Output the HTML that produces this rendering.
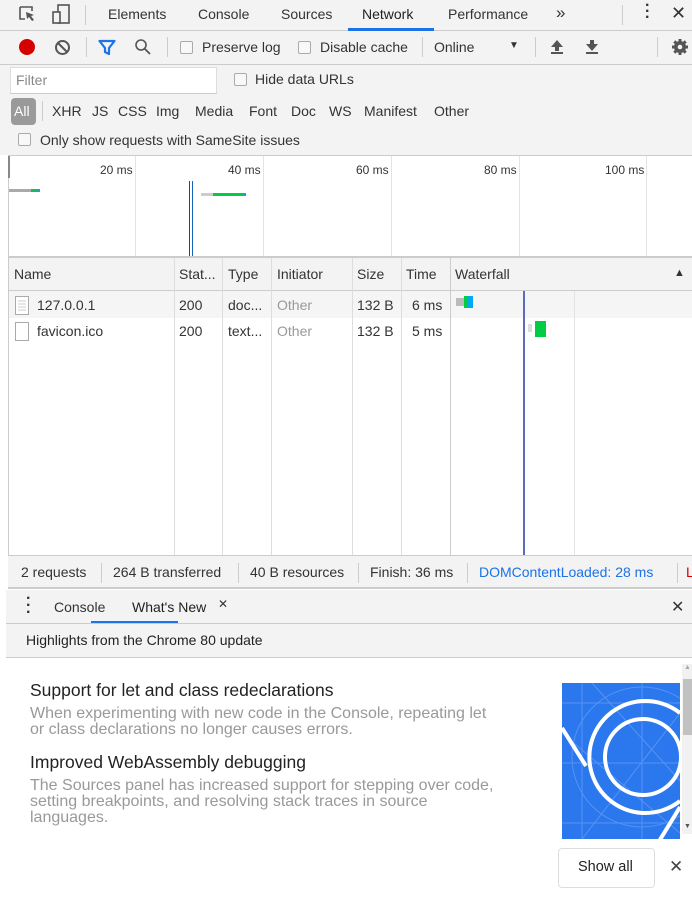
<!DOCTYPE html>
<html><head><meta charset="utf-8"><style>
*{box-sizing:border-box;margin:0;padding:0}
body{width:692px;height:898px;overflow:hidden;background:#fff;font-family:"Liberation Sans",sans-serif;font-size:13.5px;color:#333;position:relative}
.a{position:absolute;white-space:nowrap}
.g{background:#f3f3f3}
.bb{border-bottom:1px solid #ccc}
.cb{position:absolute;width:13px;height:13px;border:1px solid #aaa;border-radius:2px;background:#f8f8f8}
.vs{position:absolute;width:1px;background:#ccc}
</style></head><body>
<!-- top tab bar -->
<div class="a g bb" style="left:0;top:0;width:692px;height:31px"></div>
<svg class="a" style="left:18px;top:5px" width="20" height="20"><path d="M2 2h12v4M2 2v12h5" fill="none" stroke="#555" stroke-width="1.6"/><path d="M8 7l8 3-3 1 3 4-2 1-3-4-2 2z" fill="#555"/></svg>
<svg class="a" style="left:50px;top:3px" width="24" height="24"><rect x="8" y="2" width="11" height="18" fill="none" stroke="#555" stroke-width="1.6"/><rect x="3" y="9" width="7" height="11" fill="#f3f3f3" stroke="#555" stroke-width="1.6"/></svg>
<div class="vs" style="left:85px;top:5px;height:20px"></div>
<div class="a" style="left:108px;top:6px;font-size:14px">Elements</div>
<div class="a" style="left:198px;top:6px;font-size:14px">Console</div>
<div class="a" style="left:281px;top:6px;font-size:14px">Sources</div>
<div class="a" style="left:362px;top:6px;font-size:14px;color:#222">Network</div>
<div class="a" style="left:348px;top:28px;width:86px;height:3px;background:#1a73e8"></div>
<div class="a" style="left:448px;top:6px;font-size:14px">Performance</div>
<div class="a" style="left:556px;top:3px;font-size:17px">»</div>
<div class="vs" style="left:622px;top:5px;height:20px"></div>
<div class="a" style="left:645px;top:3px;font-size:16px;font-weight:bold;line-height:6px">·<br>·<br>·</div>
<div class="a" style="left:671px;top:3px;font-size:18px">✕</div>
<!-- toolbar 2 -->
<div class="a g bb" style="left:0;top:31px;width:692px;height:34px"></div>
<div class="a" style="left:19px;top:39px;width:16px;height:16px;border-radius:50%;background:#d50000"></div>
<svg class="a" style="left:54px;top:39px" width="17" height="17"><circle cx="8.5" cy="8.5" r="6.5" fill="none" stroke="#555" stroke-width="2"/><path d="M4 4l9 9" stroke="#555" stroke-width="2"/></svg>
<div class="vs" style="left:86px;top:37px;height:20px"></div>
<svg class="a" style="left:98px;top:39px" width="18" height="17"><path d="M1.5 2h15l-5.5 7v6l-4-2V9z" fill="none" stroke="#1a73e8" stroke-width="2.2" stroke-linejoin="round"/></svg>
<svg class="a" style="left:134px;top:38px" width="18" height="18"><circle cx="7" cy="7" r="5" fill="none" stroke="#555" stroke-width="1.6"/><path d="M11 11l5 5" stroke="#555" stroke-width="1.8"/></svg>
<div class="vs" style="left:167px;top:37px;height:20px"></div>
<div class="cb" style="left:180px;top:41px"></div>
<div class="a" style="left:202px;top:39px;font-size:14px">Preserve log</div>
<div class="cb" style="left:298px;top:41px"></div>
<div class="a" style="left:320px;top:39px;font-size:14px">Disable cache</div>
<div class="vs" style="left:422px;top:37px;height:20px"></div>
<div class="a" style="left:434px;top:39px;font-size:14px">Online</div>
<div class="a" style="left:509px;top:40px;font-size:10px">▼</div>
<div class="vs" style="left:535px;top:37px;height:20px"></div>
<svg class="a" style="left:550px;top:39px" width="14" height="16"><path d="M7 1l6 7H9v4H5V8H1z" fill="#555"/><rect x="1" y="13" width="12" height="2" fill="#555"/></svg>
<svg class="a" style="left:585px;top:39px" width="14" height="16"><path d="M7 12l6-7H9V1H5v4H1z" fill="#555"/><rect x="1" y="13" width="12" height="2" fill="#555"/></svg>
<div class="vs" style="left:657px;top:37px;height:20px"></div>
<svg class="a" style="left:670px;top:38px" width="20" height="18"><circle cx="10" cy="9" r="6" fill="#555"/><g stroke="#555" stroke-width="3"><path d="M10 1v16M2 9h16M4.3 3.3l11.4 11.4M15.7 3.3L4.3 14.7"/></g><circle cx="10" cy="9" r="2.3" fill="#f3f3f3"/></svg>
<!-- filter rows -->
<div class="a g" style="left:0;top:65px;width:692px;height:90px"></div>
<div class="a" style="left:10px;top:67px;width:207px;height:27px;background:#fff;border:1px solid #ddd;border-bottom-color:#b3d0f5"></div>
<div class="a" style="left:16px;top:72px;font-size:14px;color:#888">Filter</div>
<div class="cb" style="left:234px;top:73px"></div>
<div class="a" style="left:255px;top:71px;font-size:14px">Hide data URLs</div>
<div class="a" style="left:11px;top:98px;width:25px;height:27px;border-radius:4px;background:#9a9a9a"></div>
<div class="a" style="left:14px;top:103px;font-size:14px;color:#fff">All</div>
<div class="vs" style="left:42px;top:101px;height:20px"></div>
<div class="a" style="left:52px;top:103px;font-size:14px"><span>XHR</span></div>
<div class="a" style="left:92px;top:103px;font-size:14px">JS</div>
<div class="a" style="left:118px;top:103px;font-size:14px">CSS</div>
<div class="a" style="left:156px;top:103px;font-size:14px">Img</div>
<div class="a" style="left:195px;top:103px;font-size:14px">Media</div>
<div class="a" style="left:249px;top:103px;font-size:14px">Font</div>
<div class="a" style="left:291px;top:103px;font-size:14px">Doc</div>
<div class="a" style="left:329px;top:103px;font-size:14px">WS</div>
<div class="a" style="left:364px;top:103px;font-size:14px">Manifest</div>
<div class="a" style="left:434px;top:103px;font-size:14px">Other</div>
<div class="cb" style="left:18px;top:133px"></div>
<div class="a" style="left:40px;top:132px;font-size:14px">Only show requests with SameSite issues</div>
<!-- overview -->
<div class="a" style="left:8px;top:155px;width:684px;height:103px;border-top:1px solid #ccc;border-left:1px solid #ccc;border-bottom:2px solid #ccc"></div>
<div class="a" style="left:8px;top:156px;width:2px;height:22px;background:#888"></div>
<div class="vs" style="left:135px;top:156px;height:100px;background:#e4e4e4"></div>
<div class="vs" style="left:263px;top:156px;height:100px;background:#e4e4e4"></div>
<div class="vs" style="left:391px;top:156px;height:100px;background:#e4e4e4"></div>
<div class="vs" style="left:519px;top:156px;height:100px;background:#e4e4e4"></div>
<div class="vs" style="left:646px;top:156px;height:100px;background:#e4e4e4"></div>
<div class="a" style="left:100px;top:163px;font-size:12px">20 ms</div>
<div class="a" style="left:228px;top:163px;font-size:12px">40 ms</div>
<div class="a" style="left:356px;top:163px;font-size:12px">60 ms</div>
<div class="a" style="left:484px;top:163px;font-size:12px">80 ms</div>
<div class="a" style="left:605px;top:163px;font-size:12px">100 ms</div>
<div class="a" style="left:9px;top:189px;width:22px;height:3px;background:#aaa"></div>
<div class="a" style="left:31px;top:189px;width:6px;height:3px;background:#1db954"></div>
<div class="a" style="left:37px;top:189px;width:3px;height:3px;background:#03a9f4"></div>
<div class="a" style="left:189px;top:181px;width:1px;height:75px;background:#d00"></div>
<div class="a" style="left:192px;top:181px;width:1px;height:75px;background:#1565c0"></div>
<div class="a" style="left:201px;top:193px;width:12px;height:3px;background:#ccc"></div>
<div class="a" style="left:213px;top:193px;width:30px;height:3px;background:#0c4"></div>
<div class="a" style="left:243px;top:193px;width:3px;height:3px;background:#03a9f4"></div>
<!-- table -->
<div class="a" style="left:8px;top:258px;width:684px;height:297px;border-left:1px solid #ccc"></div>
<div class="a g bb" style="left:9px;top:258px;width:683px;height:33px"></div>
<div class="a" style="left:9px;top:291px;width:683px;height:27px;background:#f5f5f5"></div>
<div class="vs" style="left:174px;top:258px;height:297px;background:#ddd"></div>
<div class="vs" style="left:222px;top:258px;height:297px;background:#ddd"></div>
<div class="vs" style="left:271px;top:258px;height:297px;background:#ddd"></div>
<div class="vs" style="left:352px;top:258px;height:297px;background:#ddd"></div>
<div class="vs" style="left:401px;top:258px;height:297px;background:#ddd"></div>
<div class="vs" style="left:450px;top:258px;height:297px;background:#ccc"></div>
<div class="vs" style="left:574px;top:291px;height:264px;background:#e4e4e4"></div>
<div class="a" style="left:14px;top:266px;font-size:14px">Name</div>
<div class="a" style="left:179px;top:266px;font-size:14px">Stat...</div>
<div class="a" style="left:228px;top:266px;font-size:14px">Type</div>
<div class="a" style="left:277px;top:266px;font-size:14px">Initiator</div>
<div class="a" style="left:357px;top:266px;font-size:14px">Size</div>
<div class="a" style="left:406px;top:266px;font-size:14px">Time</div>
<div class="a" style="left:455px;top:266px;font-size:14px">Waterfall</div>
<div class="a" style="left:674px;top:267px;font-size:11px">▲</div>
<svg class="a" style="left:14px;top:296px" width="16" height="20"><rect x="1.5" y="0.5" width="13" height="18" fill="#fff" stroke="#aaa"/><path d="M4 5h8M4 8h8M4 11h8M4 14h8" stroke="#ccc"/></svg>
<svg class="a" style="left:14px;top:322px" width="16" height="20"><rect x="1.5" y="0.5" width="13" height="18" fill="#fff" stroke="#aaa"/></svg>
<div class="a" style="left:37px;top:297px;font-size:14px">127.0.0.1</div>
<div class="a" style="left:179px;top:297px;font-size:14px">200</div>
<div class="a" style="left:228px;top:297px;font-size:14px">doc...</div>
<div class="a" style="left:277px;top:297px;font-size:14px;color:#999">Other</div>
<div class="a" style="left:357px;top:297px;font-size:14px">132 B</div>
<div class="a" style="left:412px;top:297px;font-size:14px">6 ms</div>
<div class="a" style="left:37px;top:323px;font-size:14px">favicon.ico</div>
<div class="a" style="left:179px;top:323px;font-size:14px">200</div>
<div class="a" style="left:228px;top:323px;font-size:14px">text...</div>
<div class="a" style="left:277px;top:323px;font-size:14px;color:#999">Other</div>
<div class="a" style="left:357px;top:323px;font-size:14px">132 B</div>
<div class="a" style="left:412px;top:323px;font-size:14px">5 ms</div>
<div class="a" style="left:456px;top:298px;width:8px;height:8px;background:#bbb"></div>
<div class="a" style="left:464px;top:296px;width:3px;height:12px;background:#0c4"></div>
<div class="a" style="left:467px;top:296px;width:6px;height:12px;background:#03a9f4"></div>
<div class="a" style="left:523px;top:291px;width:2px;height:264px;background:#5c6bc0"></div>
<div class="a" style="left:528px;top:324px;width:4px;height:8px;background:#ddd"></div>
<div class="a" style="left:535px;top:321px;width:11px;height:16px;background:#0c4"></div>
<!-- status bar -->
<div class="a g" style="left:8px;top:555px;width:684px;height:34px;border-top:1px solid #ccc;border-bottom:2px solid #ccc"></div>
<div class="a" style="left:21px;top:564px;font-size:14px">2 requests</div>
<div class="vs" style="left:101px;top:563px;height:20px"></div>
<div class="a" style="left:113px;top:564px;font-size:14px">264 B transferred</div>
<div class="vs" style="left:238px;top:563px;height:20px"></div>
<div class="a" style="left:250px;top:564px;font-size:14px">40 B resources</div>
<div class="vs" style="left:358px;top:563px;height:20px"></div>
<div class="a" style="left:370px;top:564px;font-size:14px">Finish: 36 ms</div>
<div class="vs" style="left:467px;top:563px;height:20px"></div>
<div class="a" style="left:479px;top:564px;font-size:14px;color:#1a73e8">DOMContentLoaded: 28 ms</div>
<div class="vs" style="left:677px;top:563px;height:20px"></div>
<div class="a" style="left:686px;top:564px;font-size:14px;color:#d00">L</div>
<!-- drawer -->
<div class="a g bb" style="left:6px;top:590px;width:686px;height:34px"></div>
<div class="a" style="left:26px;top:595px;font-size:16px;font-weight:bold;line-height:7px">·<br>·<br>·</div>
<div class="a" style="left:54px;top:599px;font-size:14px">Console</div>
<div class="a" style="left:132px;top:599px;font-size:14px;color:#222">What's New</div>
<div class="a" style="left:218px;top:597px;font-size:12px">✕</div>
<div class="a" style="left:91px;top:621px;width:87px;height:2px;background:#1a73e8"></div>
<div class="a" style="left:671px;top:597px;font-size:16px">✕</div>
<div class="a g bb" style="left:6px;top:624px;width:686px;height:34px"></div>
<div class="a" style="left:26px;top:632px;font-size:14px;color:#222">Highlights from the Chrome 80 update</div>
<div class="a" style="left:30px;top:680px;font-size:17.5px;color:#222">Support for let and class redeclarations</div>
<div class="a" style="left:30px;top:706px;font-size:16px;color:#999;line-height:16px">When experimenting with new code in the Console, repeating let<br>or class declarations no longer causes errors.</div>
<div class="a" style="left:30px;top:752px;font-size:17.5px;color:#222">Improved WebAssembly debugging</div>
<div class="a" style="left:30px;top:778px;font-size:16px;color:#999;line-height:16px">The Sources panel has increased support for stepping over code,<br>setting breakpoints, and resolving stack traces in source<br>languages.</div>
<svg class="a" style="left:562px;top:683px" width="118" height="156"><defs><clipPath id="c"><rect width="118" height="156"/></clipPath></defs><rect width="118" height="156" fill="#2a77ee"/><g clip-path="url(#c)" fill="none"><g stroke="#6aa0f5" stroke-width="1" opacity=".7"><path d="M0 20h118M0 80h118M0 140h118M20 0v156M80 0v156M30 0l90 100M0 50l118 100M118 30L20 156"/><circle cx="80" cy="74" r="70"/></g><g stroke="#fff" stroke-width="4"><circle cx="81" cy="74" r="38"/><path d="M118 30 A56 56 0 1 0 118 118"/><path d="M0 45l24 38M118 124L96 160"/></g></g></svg>
<div class="a" style="left:682px;top:664px;width:10px;height:170px;background:#f1f1f1"></div>
<div class="a" style="left:683px;top:679px;width:9px;height:56px;background:#c1c1c1"></div>
<div class="a" style="left:684px;top:664px;font-size:7px;color:#aaa">▲</div>
<div class="a" style="left:684px;top:823px;font-size:7px;color:#555">▼</div>
<div class="a" style="left:558px;top:848px;width:97px;height:40px;border:1px solid #ddd;border-radius:4px;background:#fff"></div>
<div class="a" style="left:578px;top:859px;font-size:14.5px;color:#222">Show all</div>
<div class="a" style="left:669px;top:857px;font-size:17px;color:#444">✕</div>
</body></html>
